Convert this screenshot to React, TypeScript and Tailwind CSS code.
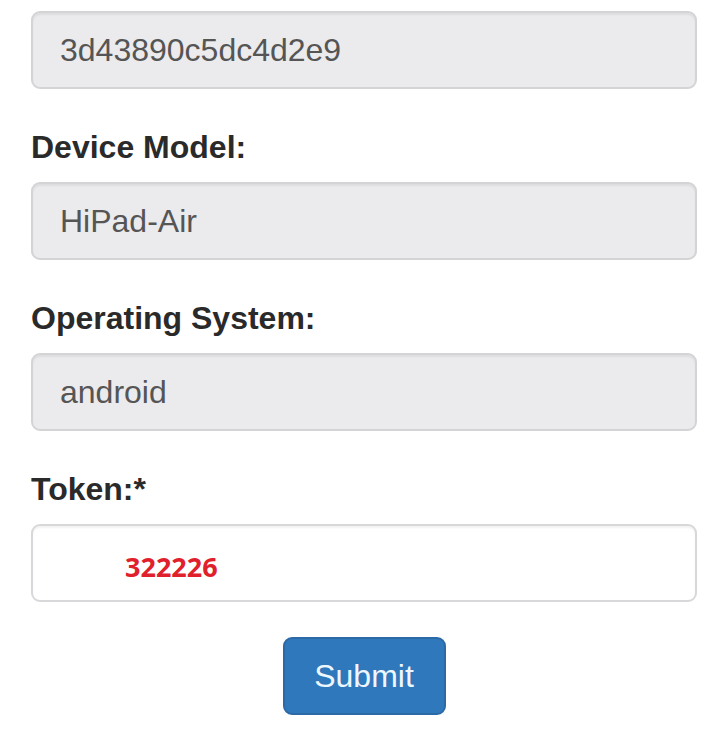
import React from "react";

const fields = [
  { label: null, value: "3d43890c5dc4d2e9" },
  { label: "Device Model:", value: "HiPad-Air" },
  { label: "Operating System:", value: "android" },
];

export default function App() {
  return (
    <div
      className="min-h-[740px] w-[726px] bg-white pt-[11px] pl-[31px] pr-[29px]"
      style={{ fontFamily: '"Liberation Sans", Arial, sans-serif' }}
    >
      {fields.map((f, i) => (
        <div key={i} className="mb-[35px]">
          {f.label && (
            <div className="mb-[12px] text-[32px] font-bold leading-[46px] text-[#2a2a2a]">
              {f.label}
            </div>
          )}
          <div className="flex h-[78px] items-center rounded-[9px] border-2 border-[#d4d3d6] bg-[#ebeaec] px-[27px] text-[32px] text-[#555] shadow-[inset_0_2px_2px_rgba(0,0,0,0.06)]">
            {f.value}
          </div>
        </div>
      ))}

      <div className="mb-[35px]">
        <div className="mb-[12px] text-[32px] font-bold leading-[46px] text-[#2a2a2a]">
          Token:*
        </div>
        <div className="flex h-[78px] items-center rounded-[9px] border-2 border-[#d8d8da] bg-white pl-[92px] pt-[9px] shadow-[inset_0_2px_2px_rgba(0,0,0,0.05)]">
          <span
            className="text-[27px] font-bold text-[#e0202a]"
            style={{ fontFamily: '"Open Sans", "Noto Sans", sans-serif' }}
          >
            322226
          </span>
        </div>
      </div>

      <div className="flex justify-center">
        <button className="h-[78px] w-[163px] rounded-[9px] border-2 border-[#2c6aa6] bg-[#2f78bb] text-[32px] text-[#eef6ff]">
          Submit
        </button>
      </div>
    </div>
  );
}
